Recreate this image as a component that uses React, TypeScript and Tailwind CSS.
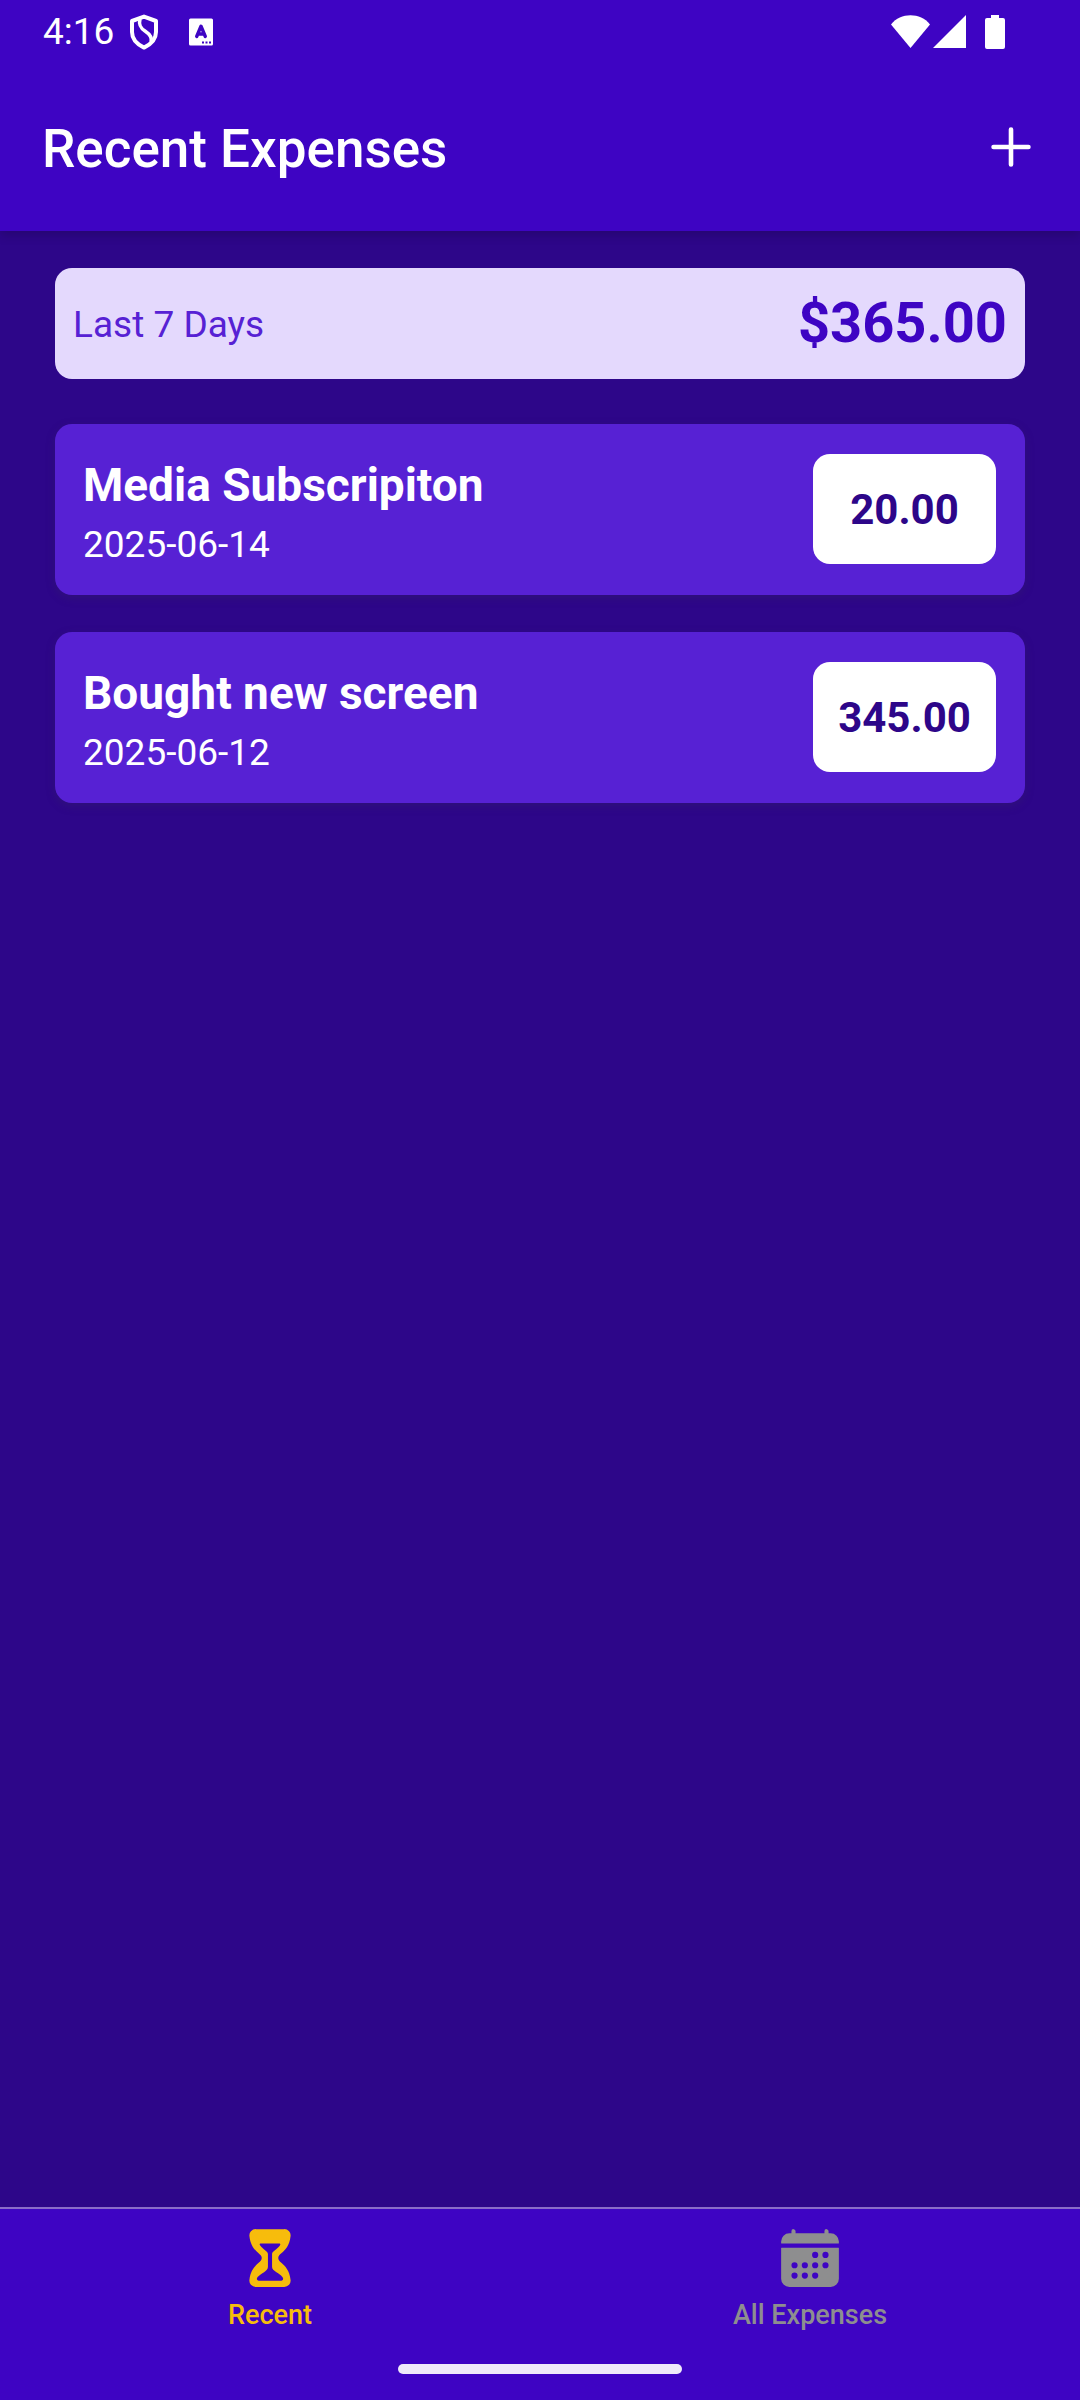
import React from "react";
import { IoAdd, IoCalendar, IoHourglass } from "react-icons/io5";

type Expense = { id: string; description: string; date: string; amount: number };

const expenses: Expense[] = [
  { id: "e1", description: "Media Subscripiton", date: "2025-06-14", amount: 20 },
  { id: "e2", description: "Bought new screen", date: "2025-06-12", amount: 345 },
];

function StatusBar() {
  return (
    <div className="flex h-[63px] items-center justify-between pr-[75px] pl-[43px]">
      <div className="flex items-center">
        <span className="text-[37px] leading-[44px]">4:16</span>
        <svg className="ml-[15px] h-9 w-[30px]" viewBox="0 0 30 36" fill="none" stroke="currentColor" strokeWidth="4" strokeLinejoin="round" aria-hidden="true">
          <path d="M15 2.6 27 7v11c0 7-4.500 12-12 15.600C7.500 30 3 25 3 18V7Z" />
          <path d="M11 5c-1.500 6 .5 9 5 12s7.500 6.500 6 11" strokeWidth="3.500" />
        </svg>
        <svg className="ml-[30px] h-7 w-6" viewBox="0 0 24 28" aria-hidden="true">
          <rect width="24" height="27" y="0.500" rx="1.500" fill="currentColor" />
          <path d="M7.700 18.500 12 8.200 16.300 18.500M9.500 16h5" fill="none" stroke="#3e04c3" strokeWidth="3.400" strokeLinecap="round" strokeLinejoin="round" />
          <path d="M13 23.500h2v2h-2zM16.500 23.500h2v2h-2zM20 23.500h2v2h-2z" fill="#3e04c3" />
        </svg>
      </div>
      <div className="flex items-center">
        <svg className="h-[34px] w-[39px]" viewBox="0 0 39 34" fill="currentColor" aria-hidden="true">
          <path d="M0 9.500C5 3 12 .3 19.500 .3S34 3 39 9.500L19.500 33Z" />
        </svg>
        <svg className="ml-[3px] h-[34px] w-[33px]" viewBox="0 0 33 34" fill="currentColor" aria-hidden="true">
          <path d="M33 0v33H0Z" />
        </svg>
        <svg className="ml-[19px] h-[34px] w-5" viewBox="0 0 20 34" fill="currentColor" aria-hidden="true">
          <path d="M6 0h8v3h4a2 2 0 0 1 2 2v27a2 2 0 0 1-2 2H2a2 2 0 0 1-2-2V5a2 2 0 0 1 2-2h4Z" />
        </svg>
      </div>
    </div>
  );
}

function Header() {
  return (
    <header className="bg-[#3e04c3] text-white shadow-[0_4px_10px_rgba(0,0,0,0.18)]">
      <StatusBar />
      <div className="flex h-[168px] items-center justify-between pr-[38px] pl-[42px]">
        <h1 className="pt-[3px] text-[53px] leading-[64px] font-medium">Recent Expenses</h1>
        <button type="button" aria-label="Add expense" className="rounded-full">
          <IoAdd className="size-[62px] [&_path]:[stroke-width:38px]" />
        </button>
      </div>
    </header>
  );
}

function ExpenseItem({ expense }: { expense: Expense }) {
  return (
    <li>
      <button
        type="button"
        className="flex w-full items-start justify-between rounded-[17px] bg-[#5721d4] py-7 pr-[29px] pl-7 text-left text-white shadow-[0_3px_10px_rgba(57,50,78,0.25)]"
      >
        <span className="flex flex-col gap-[5px]">
          <span className="text-[46px] leading-[66px] font-bold">{expense.description}</span>
          <span className="text-[37px] leading-[44px]">{expense.date}</span>
        </span>
        <span className="mt-[2px] flex h-[110px] min-w-[183px] items-center justify-center rounded-[17px] bg-white px-3 pt-[2px] text-[42px] leading-[50px] font-bold text-[#2d0689]">
          {expense.amount.toFixed(2)}
        </span>
      </button>
    </li>
  );
}

export default function App() {
  const total = expenses.reduce((sum, e) => sum + e.amount, 0);
  return (
    <div className="flex min-h-screen flex-col bg-[#2d0689] font-[Roboto,sans-serif]">
      <Header />
      <main className="flex flex-1 flex-col px-[55px] pt-[37px]">
        <section className="flex h-[111px] items-center justify-between rounded-[17px] bg-[#e4d9fd] px-[18px]">
          <span className="pt-[2px] text-[37px] leading-[44px] text-[#5721d4]">Last 7 Days</span>
          <span className="pb-[2px] text-[56px] leading-[64px] font-bold text-[#3e04c3]">${total.toFixed(2)}</span>
        </section>
        <ul className="mt-[45px] flex flex-col gap-[37px]">
          {expenses.map((e) => (
            <ExpenseItem key={e.id} expense={e} />
          ))}
        </ul>
      </main>
      <footer className="border-t-2 border-[#8a6cc8] bg-[#3e04c3] pt-4 pb-[26px]">
        <nav className="flex">
          <button type="button" aria-current="page" className="flex flex-1 flex-col items-center gap-2 text-[#f7bc0c]">
            <IoHourglass className="size-[66px]" />
            <span className="text-[27px] leading-8 font-medium">Recent</span>
          </button>
          <button type="button" className="flex flex-1 flex-col items-center gap-2 text-[#8e8e8f]">
            <IoCalendar className="size-[66px]" />
            <span className="text-[27px] leading-8 font-medium">All Expenses</span>
          </button>
        </nav>
        <div className="mx-auto mt-[33px] h-[10px] w-[284px] rounded-full bg-[#efeafa]" />
      </footer>
    </div>
  );
}
